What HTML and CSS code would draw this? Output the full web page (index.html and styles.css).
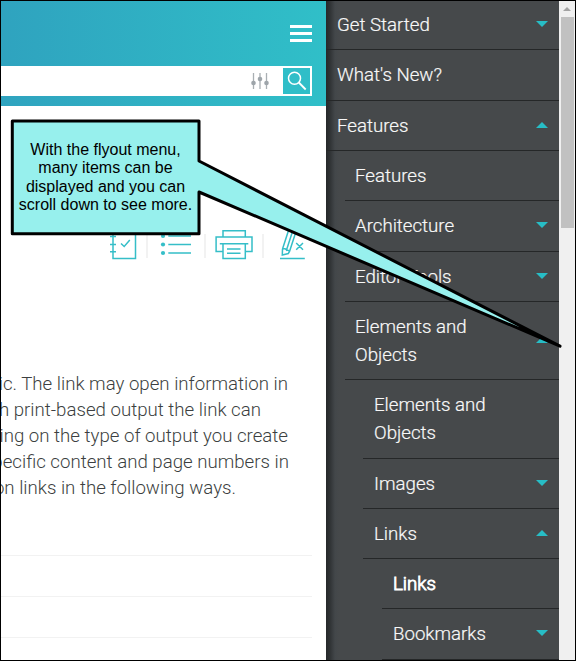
FILE: index.html
```html
<!DOCTYPE html>
<html lang="en">
<head>
<meta charset="utf-8">
<title>Links</title>
<link rel="stylesheet" href="styles.css">
</head>
<body>
<div class="window">
  <main class="page">
    <header class="header">
      <div class="menu-toggle"><i></i><i></i><i></i></div>
      <div class="search">
        <svg class="filters" width="18" height="18" viewBox="0 0 18 18">
          <path d="M2.5 1v16M9 1v16M15.5 1v16" stroke="#a9afb3" stroke-width="1.3"/>
          <g fill="#9ea5aa"><circle cx="2.5" cy="11" r="2.3"/><circle cx="9" cy="7" r="2.3"/><circle cx="15.5" cy="11" r="2.3"/></g>
        </svg>
        <div class="search-button">
          <svg width="27" height="26" viewBox="0 0 27 26" fill="none" stroke="#fff" stroke-width="1.5">
            <circle cx="11.5" cy="10.2" r="6"/><path d="M15.8 14.5L22.7 21.5" stroke-width="1.8"/>
          </svg>
        </div>
      </div>
    </header>
    <div class="toolbar">
      <svg width="36" height="32" viewBox="0 0 36 32">
        <path d="M9 2h22.5v28.5H9zM6 8.5h6M6 16.5h6M6 23.7h6"/><path d="M17 15.5l3.2 3 5.6-6.5"/>
      </svg>
      <i class="divider d1"></i>
      <svg width="36" height="32" viewBox="0 0 36 32">
        <path d="M12.3 8h22.7M12.3 16.5h22.7M12.3 25h22.7"/>
        <g class="dots"><circle cx="7" cy="8" r="2.1"/><circle cx="7" cy="16.5" r="2.1"/><circle cx="7" cy="25" r="2.1"/></g>
      </svg>
      <i class="divider d2"></i>
      <svg width="40" height="32" viewBox="0 0 40 32">
        <path d="M10 9V2.7h22.3V9M10 23.4H3.1V9H39v14.4h-6.7M6.8 15.8h28.5M10 15.8v14.7h22.3V15.8M14 21h13.5M14 25.3h13.5"/>
      </svg>
      <i class="divider d3"></i>
      <svg width="36" height="32" viewBox="0 0 36 32">
        <path d="M9.5 21L16 1M16.5 23.5L23.5 2M9.5 21l-.2 6 6-1.5 1.2-2c-.5-1.2-1.5-1.5-2.8-1.2C13.2 20.8 11 20.200 9.500 21M13.500 22L20 2M23.200 15l6.800 6.800M30 15l-6.800 6.800M7 30.500h24.800"/>
      </svg>
    </div>
    <div class="copy">
      <div class="l1">ic. The link may open information in</div>
      <div class="l2">h print-based output the link can</div>
      <div class="l3">ing on the type of output you create</div>
      <div class="l4">pecific content and page numbers in</div>
      <div class="l5">on links in the following ways.</div>
    </div>
    <div class="rows"><div></div><div></div><div></div></div>
  </main>
  <nav class="flyout">
    <div class="item first"><span>Get Started</span><i class="down"></i></div>
    <div class="item tall"><span>What's New?</span></div>
    <div class="item"><span>Features</span><i class="up"></i></div>
    <div class="item sub1"><span>Features</span></div>
    <div class="item sub1 tall"><span>Architecture</span><i class="down"></i></div>
    <div class="item sub1"><span>Editor Tools</span><i class="down"></i></div>
    <div class="item sub1 two"><span>Elements and<br>Objects</span><i class="up"></i></div>
    <div class="item sub2 two tall"><span>Elements and<br>Objects</span></div>
    <div class="item sub2"><span>Images</span><i class="down"></i></div>
    <div class="item sub2"><span>Links</span><i class="up"></i></div>
    <div class="item sub3 current"><span>Links</span></div>
    <div class="item sub3 tall"><span>Bookmarks</span><i class="down"></i></div>
  </nav>
  <div class="scrollbar"><i class="arrow"></i><div class="thumb"></div></div>
</div>
<div class="callout">
  <svg width="576" height="400" viewBox="0 0 576 400">
    <path d="M12.3 121H199V161L560 346.2L199 192V233.8H12.3Z" fill="#97f0ed" stroke="#000" stroke-width="3" stroke-linejoin="round"/>
  </svg>
  <p>With the flyout menu,<br>many items can be<br>displayed and you can<br>scroll down to see more.</p>
</div>
</body>
</html>
```
FILE: styles.css
```css
* { box-sizing: border-box; }
body { margin: 0; font-family: Roboto, sans-serif; }
.window {
  width: 576px; height: 661px; border: 1px solid #000;
  display: flex; overflow: hidden; background: #fff;
}
.page { width: 325px; overflow: hidden; }
.header {
  height: 105px; padding: 24px 14px 0 0;
  background: linear-gradient(90deg, #2fa3bf, #30bfc8);
}
.menu-toggle {
  display: flex; flex-direction: column; gap: 4px;
  width: 22px; margin-left: auto;
}
.menu-toggle i { height: 3px; background: #fff; }
.search {
  display: flex; justify-content: flex-end; align-items: center;
  gap: 14px; height: 30px; margin-top: 24px; padding-right: 2px; background: #fff;
}
.search-button { width: 27px; height: 26px; background: #30bec8; }
.search-button svg, .toolbar svg { display: block; }
.toolbar {
  display: flex; align-items: center; justify-content: flex-end;
  height: 32px; margin-top: 122px; padding-right: 17px;
}
.toolbar svg { fill: none; stroke: #35bec8; stroke-width: 1.5; }
.toolbar .dots { fill: #35bec8; stroke: none; }
.divider { width: 2px; height: 24px; margin-top: 4px; background: #f2f2f2; }
.d1 { margin-left: 6px; margin-right: 8px; }
.d2 { margin-left: 12px; margin-right: 7px; }
.d3 { margin-left: 9px; margin-right: 9px; }
.copy {
  margin-top: 111px; padding-right: 37px;
  font-size: 18.67px; font-weight: 300; line-height: 26px; color: #3c3f41;
}
.copy div { display: flex; justify-content: flex-end; white-space: nowrap; }
.copy .l1, .copy .l3 { padding-right: 1px; }
.copy .l2 { padding-right: 28px; }
.copy .l5 { padding-right: 53px; }
.rows { margin: 54px 14px 0 0; }
.rows div { height: 41px; border-top: 1px solid #f2f2f2; }
.flyout {
  width: 233px; color: #f8f8f8; font-size: 18.67px; font-weight: 300; line-height: 28px;
  -webkit-text-stroke: 0.2px #f8f8f8;
  background: linear-gradient(90deg, #25282a, #303335 4px, #43474a 9px, #46494b 13px);
}
.item {
  display: flex; align-items: center; justify-content: space-between;
  height: 50px; padding: 0 11px 2px; border-bottom: 1px solid #252728;
}
.item span { padding-top: 2px; }
.first { height: 49px; }
.tall { height: 51px; }
.two { height: 78px; }
.two.tall { height: 79px; }
.sub1 { margin-left: 19px; padding-left: 10px; }
.sub2 { margin-left: 37px; }
.sub3 { margin-left: 56px; }
.current { color: #fff; -webkit-text-stroke: 0.9px #fff; }
.up, .down { border: 0 solid transparent; border-width: 0 6px; }
.down { border-top: 6px solid #27bdc6; }
.up { border-bottom: 6px solid #27bdc6; }
.scrollbar { width: 16px; background: #f0f0f0; }
.arrow {
  display: block; width: 8px; height: 4px; margin: 6px 0 6px 4px;
  background: #a3a3a3; clip-path: polygon(50% 0, 100% 100%, 0 100%);
}
.thumb { width: 13px; height: 211px; margin-left: 2px; background: #c1c1c1; }
.callout { position: absolute; left: 0; top: 0; }
.callout svg { display: block; }
.callout p {
  position: absolute; left: 12px; top: 141px; width: 187px; margin: 0;
  font: 16px/18.4px "Liberation Sans", sans-serif; text-align: center;
  white-space: nowrap; color: #000;
}
```
